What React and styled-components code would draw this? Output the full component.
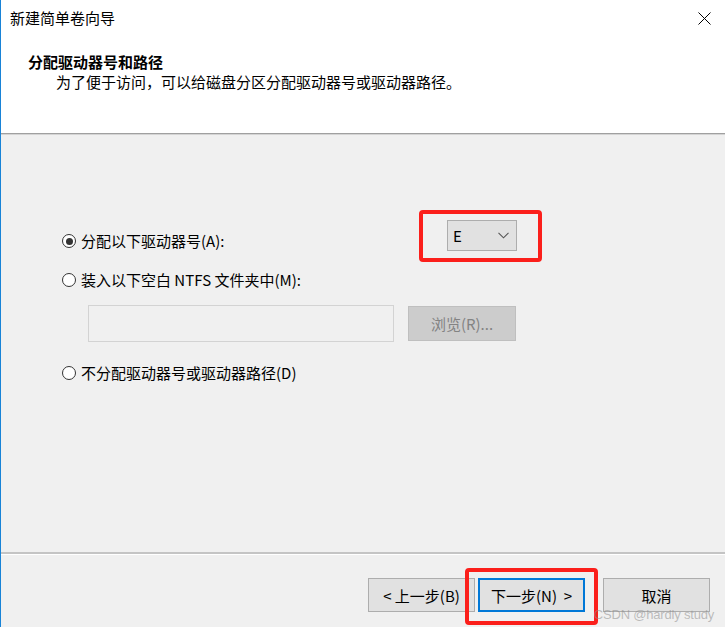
import React from 'react';
import styled, { createGlobalStyle } from 'styled-components';

const GlobalStyle = createGlobalStyle`
  html, body {
    margin: 0;
    padding: 0;
    background: #f0f0f0;
  }
  body {
    font-family: "Noto Sans CJK SC", "Microsoft YaHei UI", "Liberation Sans", sans-serif;
    font-size: 15px;
    color: #000;
  }
`;

const Window = styled.div`
  width: 725px;
  height: 627px;
  box-sizing: border-box;
  border-left: 1px solid #1883d7;
  background: #f0f0f0;
  display: flex;
  flex-direction: column;
  position: relative;
  overflow: hidden;
`;

const Header = styled.div`
  background: #fff;
  height: 134px;
  box-sizing: border-box;
  border-bottom: 1px solid #a0a0a0;
  box-shadow: 0 1px 0 #d4d4d4;
  display: flex;
  flex-direction: column;
`;

const TitleBar = styled.div`
  height: 36px;
  display: flex;
  align-items: center;
  justify-content: space-between;
  padding: 0 14px 0 9px;
`;

const Title = styled.span`
  font-size: 15px;
  line-height: 20px;
`;

const HeaderBody = styled.div`
  padding: 16px 0 0 27px;
  display: flex;
  flex-direction: column;
`;

const Heading = styled.div`
  font-weight: bold;
  font-size: 15px;
  line-height: 20px;
`;

const Subtitle = styled.div`
  padding-left: 28px;
  font-size: 15px;
  line-height: 20px;
`;

const Body = styled.div`
  flex: 1;
  padding: 86px 0 0 61px;
  display: flex;
  flex-direction: column;
`;

const Row = styled.div`
  display: flex;
  align-items: flex-end;
  margin-top: ${p => p.$gap || 0}px;
`;

const Option = styled.label`
  display: flex;
  align-items: center;
  gap: 5px;
  line-height: 20px;
  flex: ${p => (p.$width ? `0 0 ${p.$width}px` : '0 0 auto')};
`;

const Radio = styled.span`
  width: 14px;
  height: 14px;
  box-sizing: border-box;
  border-radius: 50%;
  border: 1.3px solid #333;
  background: #fff;
  display: flex;
  align-items: center;
  justify-content: center;
  &::after {
    content: '';
    width: 7px;
    height: 7px;
    border-radius: 50%;
    background: ${p => (p.$checked ? '#333' : 'transparent')};
  }
`;

const Highlight = styled.div`
  position: relative;
  &::after {
    content: '';
    position: absolute;
    top: ${p => p.$t}px;
    right: ${p => p.$r}px;
    bottom: ${p => p.$b}px;
    left: ${p => p.$l}px;
    border: 4px solid #fb1f1b;
    border-radius: 4px;
    pointer-events: none;
  }
`;

const Combo = styled.div`
  width: 70px;
  height: 31px;
  box-sizing: border-box;
  background: #e1e1e1;
  border: 1px solid #adadad;
  display: flex;
  align-items: center;
  justify-content: space-between;
  padding: 0 7px 0 5px;
  line-height: 20px;
`;

const PathRow = styled.div`
  display: flex;
  gap: 14px;
  padding-left: 26px;
  margin-top: 15px;
  align-items: center;
`;

const PathInput = styled.div`
  width: 306px;
  height: 37px;
  box-sizing: border-box;
  border: 1px solid #d3d3d3;
  background: #f0f0f0;
`;

const Browse = styled.div`
  width: 108px;
  height: 35px;
  box-sizing: border-box;
  background: #cccccc;
  border: 1px solid #bfbfbf;
  color: #838383;
  display: flex;
  align-items: center;
  justify-content: center;
`;

const Footer = styled.div`
  height: 75px;
  box-sizing: border-box;
  border-top: 2px solid #c4c4c4;
  box-shadow: inset 0 1px 0 #fff;
  display: flex;
  justify-content: flex-end;
  align-items: flex-start;
  padding: 24px 15px 0 0;
`;

const Button = styled.div`
  width: 107px;
  height: 34px;
  box-sizing: border-box;
  background: #e1e1e1;
  border: ${p => (p.$primary ? '2px solid #0078d7' : '1px solid #adadad')};
  display: flex;
  align-items: center;
  justify-content: center;
  margin-left: ${p => p.$gap || 0}px;
  white-space: pre;
`;

const Watermark = styled.div`
  position: absolute;
  right: 11px;
  bottom: 5px;
  font-family: "Liberation Sans", Arial, sans-serif;
  font-size: 13px;
  color: rgba(140, 140, 140, 0.55);
  letter-spacing: -0.2px;
`;

function CloseIcon() {
  return (
    <svg width="13" height="13" viewBox="0 0 13 13">
      <path d="M0.5 0.5L12.5 12.5M12.5 0.5L0.5 12.5" stroke="#000" strokeWidth="1" />
    </svg>
  );
}

function Chevron() {
  return (
    <svg width="11" height="7" viewBox="0 0 11 7">
      <path d="M0.5 0.8L5.5 5.8L10.5 0.8" fill="none" stroke="#555" strokeWidth="1.1" />
    </svg>
  );
}

export default function App() {
  return (
    <>
      <GlobalStyle />
      <Window>
        <Header>
          <TitleBar>
            <Title>新建简单卷向导</Title>
            <CloseIcon />
          </TitleBar>
          <HeaderBody>
            <Heading>分配驱动器号和路径</Heading>
            <Subtitle>为了便于访问，可以给磁盘分区分配驱动器号或驱动器路径。</Subtitle>
          </HeaderBody>
        </Header>

        <Body>
          <Row>
            <Option $width={385}>
              <Radio $checked />
              分配以下驱动器号(A):
            </Option>
            <Highlight $t={-10} $r={-25} $b={-11} $l={-28}>
              <Combo>
                <span>E</span>
                <Chevron />
              </Combo>
            </Highlight>
          </Row>
          <Row $gap={19}>
            <Option>
              <Radio />
              装入以下空白 NTFS 文件夹中(M):
            </Option>
          </Row>
          <PathRow>
            <PathInput />
            <Browse>浏览(R)...</Browse>
          </PathRow>
          <Row $gap={21}>
            <Option>
              <Radio />
              不分配驱动器号或驱动器路径(D)
            </Option>
          </Row>
        </Body>

        <Footer>
          <Button>{'< 上一步(B)'}</Button>
          <Highlight $t={-10} $r={-13} $b={-13} $l={-10}>
            <Button $primary $gap={3}>{'下一步(N)  >'}</Button>
          </Highlight>
          <Button $gap={18}>取消</Button>
        </Footer>
        <Watermark>CSDN @hardly study</Watermark>
      </Window>
    </>
  );
}
